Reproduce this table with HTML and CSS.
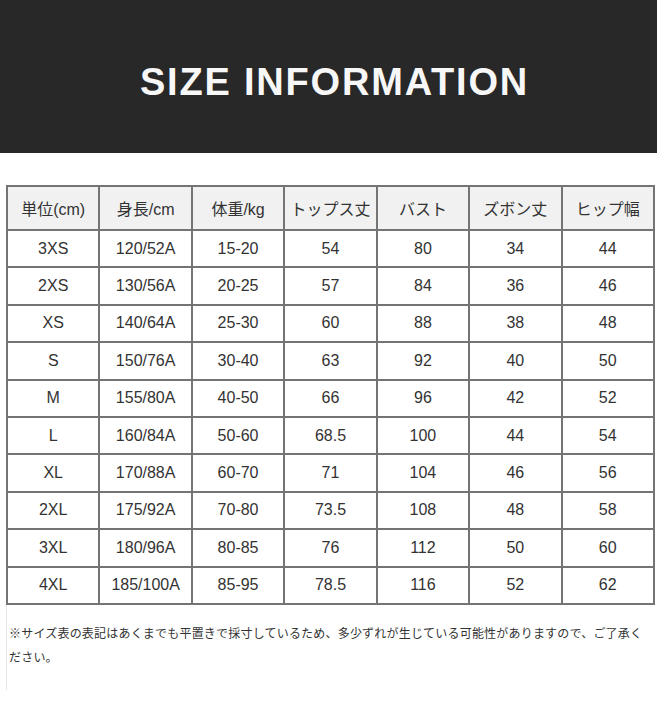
FILE: index.html
```html
<!DOCTYPE html>
<html lang="ja">
<head>
<meta charset="utf-8">
<title>SIZE INFORMATION</title>
<link rel="stylesheet" href="styles.css">
</head>
<body>
<header class="banner">
  <h1 class="banner-title">SIZE INFORMATION</h1>
</header>
<main class="content">
  <table class="size-table">
    <thead>
      <tr>
        <th>単位(cm)</th><th>身長/cm</th><th>体重/kg</th><th>トップス丈</th><th>バスト</th><th>ズボン丈</th><th>ヒップ幅</th>
      </tr>
    </thead>
    <tbody>
      <tr><td>3XS</td><td>120/52A</td><td>15-20</td><td>54</td><td>80</td><td>34</td><td>44</td></tr>
      <tr><td>2XS</td><td>130/56A</td><td>20-25</td><td>57</td><td>84</td><td>36</td><td>46</td></tr>
      <tr><td>XS</td><td>140/64A</td><td>25-30</td><td>60</td><td>88</td><td>38</td><td>48</td></tr>
      <tr><td>S</td><td>150/76A</td><td>30-40</td><td>63</td><td>92</td><td>40</td><td>50</td></tr>
      <tr><td>M</td><td>155/80A</td><td>40-50</td><td>66</td><td>96</td><td>42</td><td>52</td></tr>
      <tr><td>L</td><td>160/84A</td><td>50-60</td><td>68.5</td><td>100</td><td>44</td><td>54</td></tr>
      <tr><td>XL</td><td>170/88A</td><td>60-70</td><td>71</td><td>104</td><td>46</td><td>56</td></tr>
      <tr><td>2XL</td><td>175/92A</td><td>70-80</td><td>73.5</td><td>108</td><td>48</td><td>58</td></tr>
      <tr><td>3XL</td><td>180/96A</td><td>80-85</td><td>76</td><td>112</td><td>50</td><td>60</td></tr>
      <tr><td>4XL</td><td>185/100A</td><td>85-95</td><td>78.5</td><td>116</td><td>52</td><td>62</td></tr>
    </tbody>
  </table>
  <p class="note">※サイズ表の表記はあくまでも平置きで採寸しているため、多少ずれが生じている可能性がありますので、ご了承ください。</p>
</main>
</body>
</html>
```
FILE: styles.css
```css
* {
  box-sizing: border-box;
}

html, body {
  margin: 0;
  padding: 0;
  background: #ffffff;
}

body {
  font-family: "Liberation Sans", "Noto Sans CJK JP", sans-serif;
  color: #333333;
}

.banner {
  height: 153px;
  background: #282828;
  display: flex;
  align-items: center;
  justify-content: center;
}

.banner-title {
  margin: 0 0 0 12px;
  padding-top: 10px;
  font-family: "Liberation Sans", sans-serif;
  font-weight: 700;
  font-size: 38px;
  letter-spacing: 1.8px;
  color: #f7f7f7;
  line-height: 1;
}

.content {
  padding: 32px 2px 0 6px;
}

.size-table {
  width: 649px;
  border-collapse: collapse;
  table-layout: fixed;
  border: 2px solid #8a8a8a;
}

.size-table th,
.size-table td {
  border: 2px solid #747474;
  text-align: center;
  padding: 0;
  font-size: 16px;
  font-weight: 400;
  color: #333333;
}

.size-table th {
  height: 44px;
  background: #f1f1f1;
  font-family: "Liberation Sans", "Noto Sans CJK JP", sans-serif;
  font-size: 16px;
}

.size-table td {
  height: 37.4px;
  background: #ffffff;
}

.note {
  margin: 0;
  max-width: 640px;
  padding: 16px 0 21px 2px;
  border-left: 1px solid #e4e4e4;
  font-family: "Noto Sans CJK JP", sans-serif;
  font-size: 12px;
  letter-spacing: 0.2px;
  line-height: 24px;
  color: #333333;
}
```
